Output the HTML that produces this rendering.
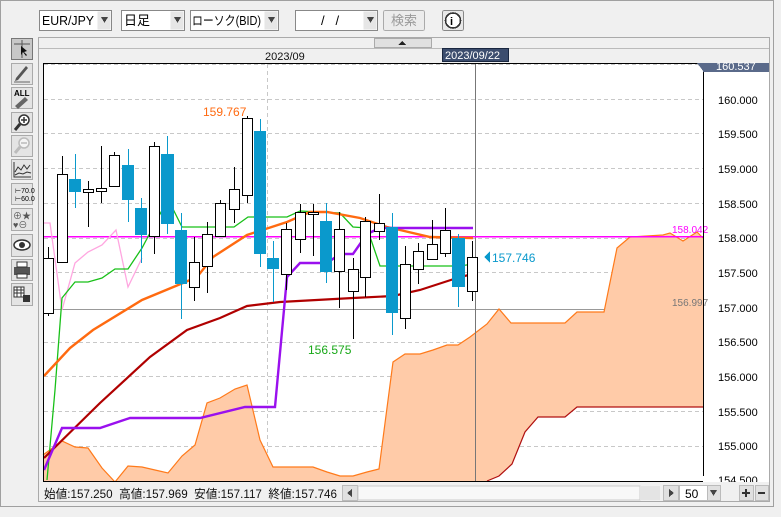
<!DOCTYPE html>
<html><head><meta charset="utf-8"><style>
body{margin:0;width:781px;height:512px;overflow:hidden;background:#f0f0f0;font-family:"Liberation Sans","Noto Sans CJK JP",sans-serif}
svg text{font-family:"Liberation Sans","Noto Sans CJK JP",sans-serif}
</style></head><body>
<svg width="781" height="512" xmlns="http://www.w3.org/2000/svg" shape-rendering="crispEdges">
<rect x="0" y="0" width="781" height="512" fill="#f0f0f0"/>
<rect x="0.5" y="0.5" width="773" height="506" fill="none" stroke="#a0a0a0"/>
<g font-size="13">
<rect x="39.5" y="10.5" width="72" height="20" fill="#fff" stroke="#888"/><rect x="97.5" y="11.5" width="13" height="18" fill="#e6e6e6"/><path d="M101 17h7l-3.5 6z" fill="#444"/><text x="42" y="25" textLength="52" lengthAdjust="spacingAndGlyphs">EUR/JPY</text>
<rect x="121.5" y="10.5" width="63" height="20" fill="#fff" stroke="#888"/><rect x="170.5" y="11.5" width="13" height="18" fill="#e6e6e6"/><path d="M174 17h7l-3.5 6z" fill="#444"/><text x="124" y="25">日足</text>
<rect x="190.5" y="10.5" width="88" height="20" fill="#fff" stroke="#888"/><rect x="264.5" y="11.5" width="13" height="18" fill="#e6e6e6"/><path d="M268 17h7l-3.5 6z" fill="#444"/><text x="192" y="25" font-size="12.5" textLength="69" lengthAdjust="spacingAndGlyphs">ローソク(BID)</text>
<rect x="295.5" y="10.5" width="82" height="20" fill="#fff" stroke="#888"/><rect x="363.5" y="11.5" width="13" height="18" fill="#e6e6e6"/><path d="M367 17h7l-3.5 6z" fill="#444"/><text x="321" y="25">/&#160;&#160;&#160;/</text>
<rect x="383.5" y="10.5" width="41" height="20" rx="2" fill="#ececec" stroke="#aaa"/><text x="391" y="25" fill="#999">検索</text>
<rect x="442.5" y="10.5" width="21" height="20" rx="2" fill="#e8e8e8" stroke="#888"/><circle cx="453" cy="20.5" r="7.5" fill="#fff" stroke="#333" stroke-width="1.6"/><text x="450" y="25" font-size="11" font-weight="bold">i</text>
</g>
<g fill="#e4e4e4" stroke="#aaa">
<rect x="11.5" y="38.5" width="21" height="21" fill="#c8c8c8" stroke="#777"/>
<rect x="11.5" y="63.5" width="21" height="21"/><rect x="11.5" y="87.5" width="21" height="21"/><rect x="11.5" y="112.5" width="21" height="20"/><rect x="11.5" y="135.5" width="21" height="21"/><rect x="11.5" y="159.5" width="21" height="20"/><rect x="11.5" y="183.5" width="21" height="21"/><rect x="11.5" y="208.5" width="21" height="22"/><rect x="11.5" y="234.5" width="21" height="22"/><rect x="11.5" y="259.5" width="21" height="21"/><rect x="11.5" y="283.5" width="21" height="22"/>
</g>
<g shape-rendering="auto">
<path d="M14 44h16M22 40v18" stroke="#555"/><path d="M21 46l0 9 2-3 3 4 1-1-3-3 3-1z" fill="#111"/>
<path d="M15 81l3-1 10-12-2-2-10 12z" fill="#555"/><path d="M14 82h16" stroke="#666"/>
<text x="14" y="96" font-size="8" font-weight="bold">ALL</text><path d="M15 106l10-9 3 3-10 9z" fill="#666"/>
<circle cx="24" cy="120" r="5" fill="#fff" stroke="#333" stroke-width="1.5"/><path d="M21 120h6M24 117v6" stroke="#333" stroke-width="1.5"/><path d="M20 124l-5 6" stroke="#333" stroke-width="3"/>
<circle cx="24" cy="143" r="5" fill="#f4f4f4" stroke="#bbb" stroke-width="1.5"/><path d="M21 143h6" stroke="#bbb" stroke-width="1.5"/><path d="M20 147l-5 6" stroke="#bbb" stroke-width="3"/>
<path d="M14 162v15h17M15 172l3-5 3 3 3-5 3 4 3-4M15 175l4-2 4 1 4-2 4 1" stroke="#333" fill="none"/>
<text x="15" y="193" font-size="7">⊢70.0</text><text x="15" y="201" font-size="7">⊢60.0</text>
<text x="13" y="219" font-size="9" fill="#555">⊕★</text><text x="13" y="228" font-size="9" fill="#555">♥⊖</text>
<ellipse cx="22" cy="245" rx="8" ry="5" fill="#fff" stroke="#333" stroke-width="1.5"/><circle cx="22" cy="245" r="3" fill="#333"/>
<rect x="14" y="267" width="16" height="8" fill="#555"/><rect x="17" y="262" width="10" height="5" fill="#fff" stroke="#333"/><rect x="17" y="274" width="10" height="4" fill="#fff" stroke="#333"/>
<path d="M14 287h10v10H14zM14 290h10M14 293h10M17 287v10M21 287v10" stroke="#333" fill="#fff"/><rect x="23" y="295" width="7" height="7" fill="#333"/>
</g>
<rect x="38.5" y="37.5" width="731" height="464" fill="#f0f0f0" stroke="#aaa"/>
<rect x="39" y="38" width="730" height="10" fill="#f0f0f0"/><path d="M39 48.5h730" stroke="#bbb"/>
<rect x="374.5" y="38.5" width="57" height="9" fill="#e0e0e0" stroke="#aaa"/><path d="M398 45h8l-4-4z" fill="#222"/>
<text x="265" y="60" font-size="11" fill="#111">2023/09</text>
<rect x="442.5" y="48.5" width="66" height="13" fill="#3c4d6e" stroke="#1a2740"/><text x="445" y="59" font-size="11" fill="#fff">2023/09/22</text>
<rect x="43" y="63" width="660" height="418" fill="#fff"/>
<rect x="703" y="63" width="66" height="418" fill="#fff"/>
<g stroke="#c8c8c8" stroke-dasharray="4,3">
<path d="M44 64.5h659M44 99.5h659M44 133.5h659M44 168.5h659M44 203.5h659M44 238.5h659M44 272.5h659M44 342.5h659M44 376.5h659M44 411.5h659M44 446.5h659"/>
<path d="M267.5 64v416"/>
</g>
<path d="M44 309.5h659" stroke="#999"/>
<polygon shape-rendering="auto" fill="#ffcba8" points="43,455 62,441 75,447 88,448 102,468 115,482 128,466 142,467 155,470 168,473 182,456 195,445 207,403 220,398 235,389 247,385 260,440 273,467 313,467 327,472 340,476 353,476 367,472 379,469 393,362 405,354 420,354 433,350 447,345 458,345 470,337 487,324 499,309 511,323 565,323 577,312 604,312 617,248 630,237 663,235 670,233 683,241 697,232 703,238 703,407 577,407 565,417 538,417 525,432 512,464 499,476 487,481 43,481"/>
<polyline shape-rendering="auto" fill="none" stroke="#ff7a1a" stroke-width="1.2" points="43,455 62,441 75,447 88,448 102,468 115,482 128,466 142,467 155,470 168,473 182,456 195,445 207,403 220,398 235,389 247,385 260,440 273,467 313,467 327,472 340,476 353,476 367,472 379,469 393,362 405,354 420,354 433,350 447,345 458,345 470,337 487,324 499,309 511,323 565,323 577,312 604,312 617,248 630,237 663,235 670,233 683,241 697,232 703,238"/>
<polyline shape-rendering="auto" fill="none" stroke="#b01010" stroke-width="1.2" points="487,481 499,476 512,464 525,432 538,417 565,417 577,407 703,407"/>
<path d="M475.5 63v418" stroke="#777"/>
<path d="M44 236.5h659" stroke="#ff00ff" stroke-width="1.5"/>
<text x="672" y="233" font-size="10" fill="#ff00ff">158.042</text>
<text x="672" y="306" font-size="10" fill="#777">156.997</text>
<g shape-rendering="auto" fill="none">
<polyline stroke="#ffa6e0" stroke-width="1.3" points="43,223 50,223 62,310 75,263 88,252 102,245 116,230 128,287 142,258"/>
<polyline stroke="#18c018" stroke-width="1.3" points="47,480 55,390 62,298 75,282 88,282 102,278 115,269 128,269 142,248 168,199 182,227 234,227 248,217 287,217 300,211 340,213 353,227 367,228 380,266 460,266 473,264"/>
<polyline stroke="#ff6a10" stroke-width="2.4" points="44,376 70,348 93,330 142,300 183,283 197,277 213,257 247,235 287,222 310,212 327,212 360,218 387,227 400,230 430,237 473,238"/>
<polyline stroke="#b00000" stroke-width="2.2" points="44,458 100,403 150,357 187,330 220,318 247,306 280,302 353,298 393,296 420,290 460,277 473,274"/>
<polyline stroke="#9a10ee" stroke-width="2.4" points="44,470 62,428 100,428 130,418 200,418 245,407 275,407 287,277 300,263 327,263 340,254 353,254 367,234 380,228 473,228"/>
</g>
<g stroke="#000">
<path d="M48.5 247v69M62.5 156v107M88.5 181v46M101.5 146v57M114.5 152v35M154.5 142v112M194.5 237v64M207.5 222v71M220.5 200v36M234.5 167v56M247.5 116v87M286.5 223v67M300.5 204v49M313.5 204v52M339.5 212v96M353.5 258v81M365.5 217v80M379.5 194v46M405.5 246v83M418.5 243v41M432.5 220v39M445.5 208v49M472.5 241v60"/>
</g>
<g stroke="#0a99cc">
<path d="M75.5 154v54M128.5 149v73M141.5 198v65M167.5 136v98M181.5 213v106M260.5 119v148M273.5 241v61M326.5 203v80M392.5 213v122M458.5 234v73"/>
</g>
<g fill="#fff" stroke="#000">
<rect x="43.5" y="258.5" width="10" height="55"/><rect x="57.5" y="174.5" width="10" height="88"/><rect x="83.5" y="189.5" width="10" height="3"/><rect x="96.5" y="188.5" width="10" height="3"/><rect x="109.5" y="155.5" width="10" height="31"/><rect x="149.5" y="146.5" width="10" height="90"/><rect x="189.5" y="262.5" width="10" height="25"/><rect x="202.5" y="234.5" width="10" height="32"/><rect x="215.5" y="203.5" width="10" height="33"/><rect x="229.5" y="189.5" width="10" height="20"/><rect x="242.5" y="118.5" width="10" height="77"/><rect x="281.5" y="229.5" width="10" height="45"/><rect x="295.5" y="212.5" width="10" height="27"/><rect x="308.5" y="212.5" width="10" height="2"/><rect x="334.5" y="229.5" width="10" height="42"/><rect x="348.5" y="269.5" width="10" height="22"/><rect x="360.5" y="221.5" width="10" height="56"/><rect x="374.5" y="223.5" width="10" height="8"/><rect x="400.5" y="264.5" width="10" height="54"/><rect x="413.5" y="251.5" width="10" height="18"/><rect x="427.5" y="244.5" width="10" height="15"/><rect x="440.5" y="230.5" width="10" height="23"/><rect x="467.5" y="257.5" width="10" height="34"/>
</g>
<g fill="#0a99cc">
<rect x="69" y="179" width="12" height="13"/><rect x="122" y="165" width="12" height="35"/><rect x="135" y="208" width="12" height="27"/><rect x="161" y="154" width="13" height="70"/><rect x="175" y="230" width="12" height="54"/><rect x="254" y="131" width="12" height="123"/><rect x="267" y="258" width="12" height="11"/><rect x="320" y="221" width="12" height="51"/><rect x="386" y="227" width="12" height="86"/><rect x="452" y="238" width="13" height="49"/>
</g>
<text x="203" y="116" font-size="12" fill="#ff6a10">159.767</text>
<text x="308" y="354" font-size="12" fill="#18a818">156.575</text>
<path d="M484 257l6-6v12z" fill="#0a99cc"/><text x="492" y="262" font-size="12" fill="#0a99cc">157.746</text>
<rect x="43.5" y="63.5" width="660" height="418" fill="none" stroke="#000"/>
<path d="M703.5 63v419" stroke="#000"/>
<rect x="703" y="63" width="66" height="9" fill="#5a6a8a"/><path d="M697 63h7v9z" fill="#5a6a8a"/>
<text x="716" y="70" font-size="11" fill="#fff">160.537</text>
<g font-size="11" fill="#000">
<text x="718" y="104">160.000</text><text x="718" y="138">159.500</text><text x="718" y="173">159.000</text><text x="718" y="208">158.500</text><text x="718" y="242">158.000</text><text x="718" y="277">157.500</text><text x="718" y="312">157.000</text><text x="718" y="346">156.500</text><text x="718" y="381">156.000</text><text x="718" y="416">155.500</text><text x="718" y="450">155.000</text>
</g>
<rect x="703" y="476" width="66" height="6" fill="#fff"/><text x="718" y="484" font-size="11">154.500</text>
<rect x="39" y="482" width="730" height="19" fill="#f0f0f0"/>
<text x="44" y="498" font-size="12" fill="#111" textLength="293" lengthAdjust="spacingAndGlyphs">始値:157.250&#160;&#160;高値:157.969&#160;&#160;安値:157.117&#160;&#160;終値:157.746</text>
<rect x="342.5" y="485.5" width="15" height="15" fill="#e0e0e0" stroke="#bbb"/><path d="M352 489v8l-5-4z" fill="#444"/>
<rect x="358" y="486" width="282" height="14" fill="#f8f8f8" stroke="#ccc"/>
<rect x="640" y="486" width="20" height="14" fill="#e4e4e4"/>
<rect x="663.5" y="485.5" width="15" height="15" fill="#e0e0e0" stroke="#bbb"/><path d="M669 489v8l5-4z" fill="#444"/>
<rect x="679.5" y="485.5" width="28" height="15" fill="#fff" stroke="#bbb"/><text x="685" y="498" font-size="12">50</text>
<rect x="707.5" y="485.5" width="13" height="15" fill="#e0e0e0" stroke="#bbb"/><path d="M710 490h7l-3.5 6z" fill="#444"/>
<rect x="739.5" y="485.5" width="14" height="15" fill="#e0e0e0" stroke="#bbb"/><path d="M742 493h8M746 489v8" stroke="#333" stroke-width="2"/>
<rect x="755.5" y="485.5" width="13" height="15" fill="#e0e0e0" stroke="#bbb"/><path d="M758 493h7" stroke="#333" stroke-width="2"/>
</svg>
</body></html>
